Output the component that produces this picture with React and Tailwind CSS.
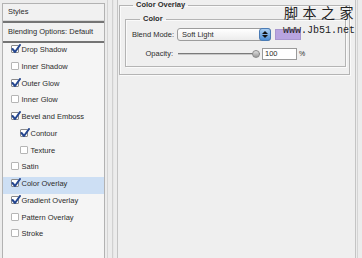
import React from "react";

const items = [
  { label: "Drop Shadow", checked: true },
  { label: "Inner Shadow", checked: false },
  { label: "Outer Glow", checked: true },
  { label: "Inner Glow", checked: false },
  { label: "Bevel and Emboss", checked: true },
  { label: "Contour", checked: true, nested: true },
  { label: "Texture", checked: false, nested: true },
  { label: "Satin", checked: false },
  { label: "Color Overlay", checked: true, selected: true },
  { label: "Gradient Overlay", checked: true },
  { label: "Pattern Overlay", checked: false },
  { label: "Stroke", checked: false },
];

function Check({ checked }) {
  return (
    <div className={"w-[8px] h-[8px] shrink-0 border bg-white relative rounded-[1px] " + (checked ? "border-[#8a8a8a]" : "border-[#b5b5b5]")}>
      {checked && (
        <svg className="absolute left-[-1px] top-[-2px]" width="10" height="10" viewBox="0 0 10 10">
          <path d="M1.5 5 L4 8 L9 1" fill="none" stroke="#24468f" strokeWidth="2" strokeLinecap="round" strokeLinejoin="round" />
        </svg>
      )}
    </div>
  );
}

export default function App() {
  return (
    <div
      className="w-[362px] h-[258px] bg-[#ececec] flex relative overflow-hidden text-[#2c2c2c]"
      style={{ fontFamily: '"Liberation Sans", Arial, sans-serif' }}
    >
      {/* left panel */}
      <div className="w-[105px] h-full pl-[2px] pt-[3px] shrink-0">
        <div className="h-[260px] border border-[#b2b2b2] bg-[#f5f5f5] flex flex-col">
          <div className="h-[17px] flex items-center px-[5px] text-[7.5px] bg-[#f1f1f1] border-b border-[#d8d8d8]">Styles</div>
          <div className="h-[2px] bg-[#747474]" />
          <div className="h-[18px] flex items-center px-[5px] text-[7.5px] bg-[#f1f1f1]">Blending Options: Default</div>
          <div className="h-[2px] bg-[#747474]" />
          <div className="flex flex-col">
            {items.map((it) => (
              <div
                key={it.label}
                className={
                  "h-[16.75px] flex items-start pt-[2px] gap-[2.5px] text-[7.5px] leading-[9px] " +
                  (it.nested ? "pl-[17px] " : "pl-[8px] ") +
                  (it.selected ? "bg-[#cddff4]" : "")
                }
              >
                <Check checked={it.checked} />
                <span>{it.label}</span>
              </div>
            ))}
          </div>
        </div>
      </div>

      {/* splitter */}
      <div className="w-[12px] h-full flex shrink-0">
        <div className="w-[2px]" />
        <div className="w-[1px] h-full bg-[#d4d4d4]" />
        <div className="w-[4px]" />
        <div className="w-[1px] h-full bg-[#d0d0d0]" />
        <div className="w-[1px] h-full bg-[#e6e6e6]" />
      </div>

      {/* right panel */}
      <div className="w-[239px] h-full border-l border-r border-[#c4c4c4] bg-[#efefef] shrink-0 pl-[1px] pr-[5px]">
        <fieldset className="border border-[#b4b4b4] shadow-[inset_1px_1px_0_#fafafa,1px_1px_0_#fafafa] pl-[5px] pr-[3px] pb-[7px] w-[231px]">
          <legend className="ml-[8px] px-[3px] text-[7.5px] font-bold leading-[10px]">Color Overlay</legend>
          <fieldset className="mt-[4px] border border-[#b4b4b4] shadow-[inset_1px_1px_0_#fafafa,1px_1px_0_#fafafa] pb-[6px]">
            <legend className="ml-[14px] px-[3px] text-[7.5px] font-bold leading-[10px]">Color</legend>
            <div className="mt-[4px] h-[13px] flex items-center">
              <div className="w-[48px] text-right text-[7.5px]">Blend Mode:</div>
              <div className="ml-[3px] w-[94px] h-[13px] rounded-[3px] border border-[#9c9c9c] bg-gradient-to-b from-white to-[#ececec] flex items-center relative">
                <span className="pl-[4px] text-[7.5px]">Soft Light</span>
                <div className="absolute right-[-1px] top-[-1px] w-[12px] h-[13px] rounded-[3px] bg-gradient-to-b from-[#a9cdf0] to-[#4e8fd6] border border-[#4a7bb5] flex flex-col items-center justify-center gap-[1px]">
                  <svg width="6" height="3" viewBox="0 0 6 3"><path d="M0 3 L3 0 L6 3 Z" fill="#111" /></svg>
                  <svg width="6" height="3" viewBox="0 0 6 3"><path d="M0 0 L3 3 L6 0 Z" fill="#111" /></svg>
                </div>
              </div>
              <div className="ml-[4px] w-[26px] h-[11px] bg-[#b8a4e0] border border-[#a896cf]" />
            </div>
            <div className="mt-[7px] h-[12px] flex items-center">
              <div className="w-[47px] text-right text-[7.5px]">Opacity:</div>
              <div className="ml-[5px] w-[82px] h-[10px] relative flex items-center">
                <div className="w-full h-[2px] bg-[#7a7a7a] border-b border-[#c8c8c8]" />
                <div className="absolute right-[0px] top-[1px] w-[8px] h-[8px] rounded-full bg-gradient-to-b from-[#e0e0e0] to-[#9a9a9a] border border-[#8a8a8a]" />
              </div>
              <div className="ml-[2px] w-[35px] h-[12px] bg-white border border-[#9a9a9a] flex items-center pl-[2px] text-[7.5px]">100</div>
              <div className="ml-[2px] text-[7px]">%</div>
            </div>
          </fieldset>
        </fieldset>
      </div>
      <div className="w-[1px] h-full bg-[#d4d4d4] ml-[1px]" />

      {/* watermark overlay */}
      <div className="absolute left-[284px] top-[4px] flex flex-col items-start">
        <div
          className="text-[14px] leading-[16px] text-[#222] tracking-[4.5px]"
          style={{ fontFamily: '"Noto Sans CJK SC", sans-serif' }}
        >
          脚本之家
        </div>
        <div
          className="text-[10px] leading-[12px] mt-[5px] text-[#222] -ml-[1px]"
          style={{ fontFamily: '"Liberation Mono", monospace' }}
        >
          www.Jb51.net
        </div>
      </div>
    </div>
  );
}
